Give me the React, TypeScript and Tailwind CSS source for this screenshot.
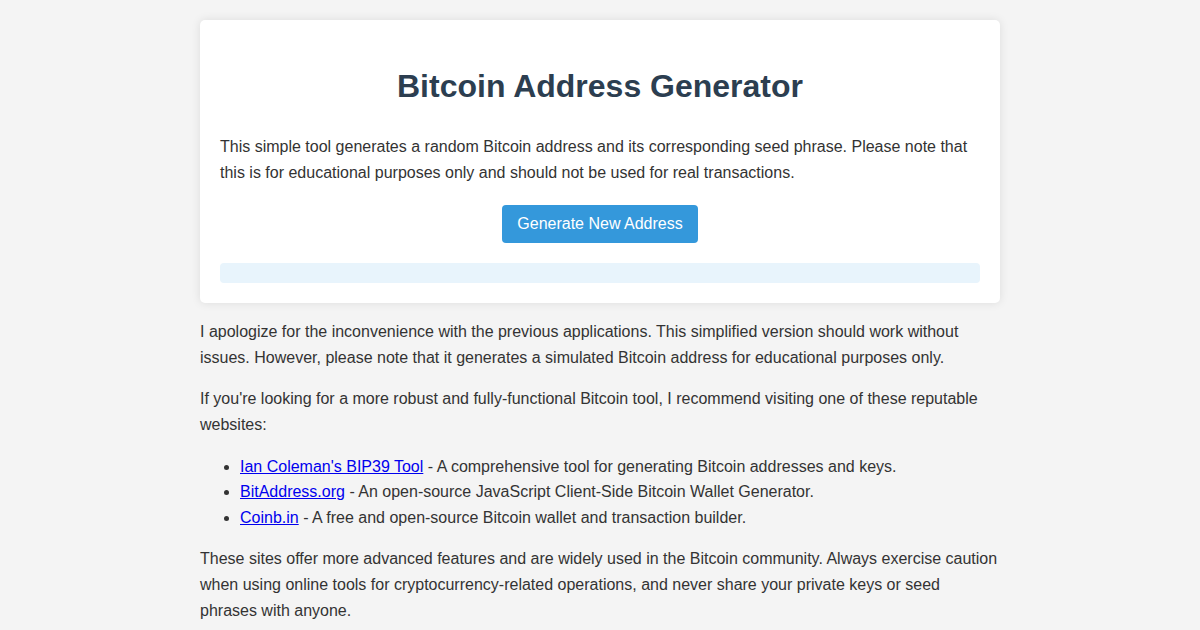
export default function App() {
  return (
    <div className="min-h-[630px] bg-[#f4f4f4] text-[#333] text-[16px] leading-[1.6]" style={{ fontFamily: '"Liberation Sans", Arial, sans-serif' }}>
      <div className="mx-auto max-w-[800px] pt-[20px] pb-[20px]">
        <div className="bg-white rounded-[5px] p-[20px] shadow-[0_0_10px_rgba(0,0,0,0.1)]">
          <h1 className="text-center text-[32px] font-bold leading-[1.6] text-[#2c3e50] mt-[21.44px] mb-[21.44px]">
            Bitcoin Address Generator
          </h1>
          <p>
            This simple tool generates a random Bitcoin address and its corresponding seed phrase. Please note that this is for educational purposes only and should not be used for real transactions.
          </p>
          <div className="flex justify-center mt-[20px]">
            <button className="bg-[#3498db] text-white rounded-[4px] px-[15px] py-[10px] leading-[18px] text-[16px]">
              Generate New Address
            </button>
          </div>
          <div className="mt-[20px] h-[20px] rounded-[4px] bg-[#e8f4fc]"></div>
        </div>
        <p className="mt-[16px]">
          I apologize for the inconvenience with the previous applications. This simplified version should work without issues. However, please note that it generates a simulated Bitcoin address for educational purposes only.
        </p>
        <p className="mt-[16px]">
          If you're looking for a more robust and fully-functional Bitcoin tool, I recommend visiting one of these reputable websites:
        </p>
        <ul className="mt-[16px] pl-[40px] list-disc">
          <li>
            <a href="#" className="text-[#0000ee] underline">Ian Coleman's BIP39 Tool</a> - A comprehensive tool for generating Bitcoin addresses and keys.
          </li>
          <li>
            <a href="#" className="text-[#0000ee] underline">BitAddress.org</a> - An open-source JavaScript Client-Side Bitcoin Wallet Generator.
          </li>
          <li>
            <a href="#" className="text-[#0000ee] underline">Coinb.in</a> - A free and open-source Bitcoin wallet and transaction builder.
          </li>
        </ul>
        <p className="mt-[16px]">
          These sites offer more advanced features and are widely used in the Bitcoin community. Always exercise caution when using online tools for cryptocurrency-related operations, and never share your private keys or seed phrases with anyone.
        </p>
      </div>
    </div>
  );
}
